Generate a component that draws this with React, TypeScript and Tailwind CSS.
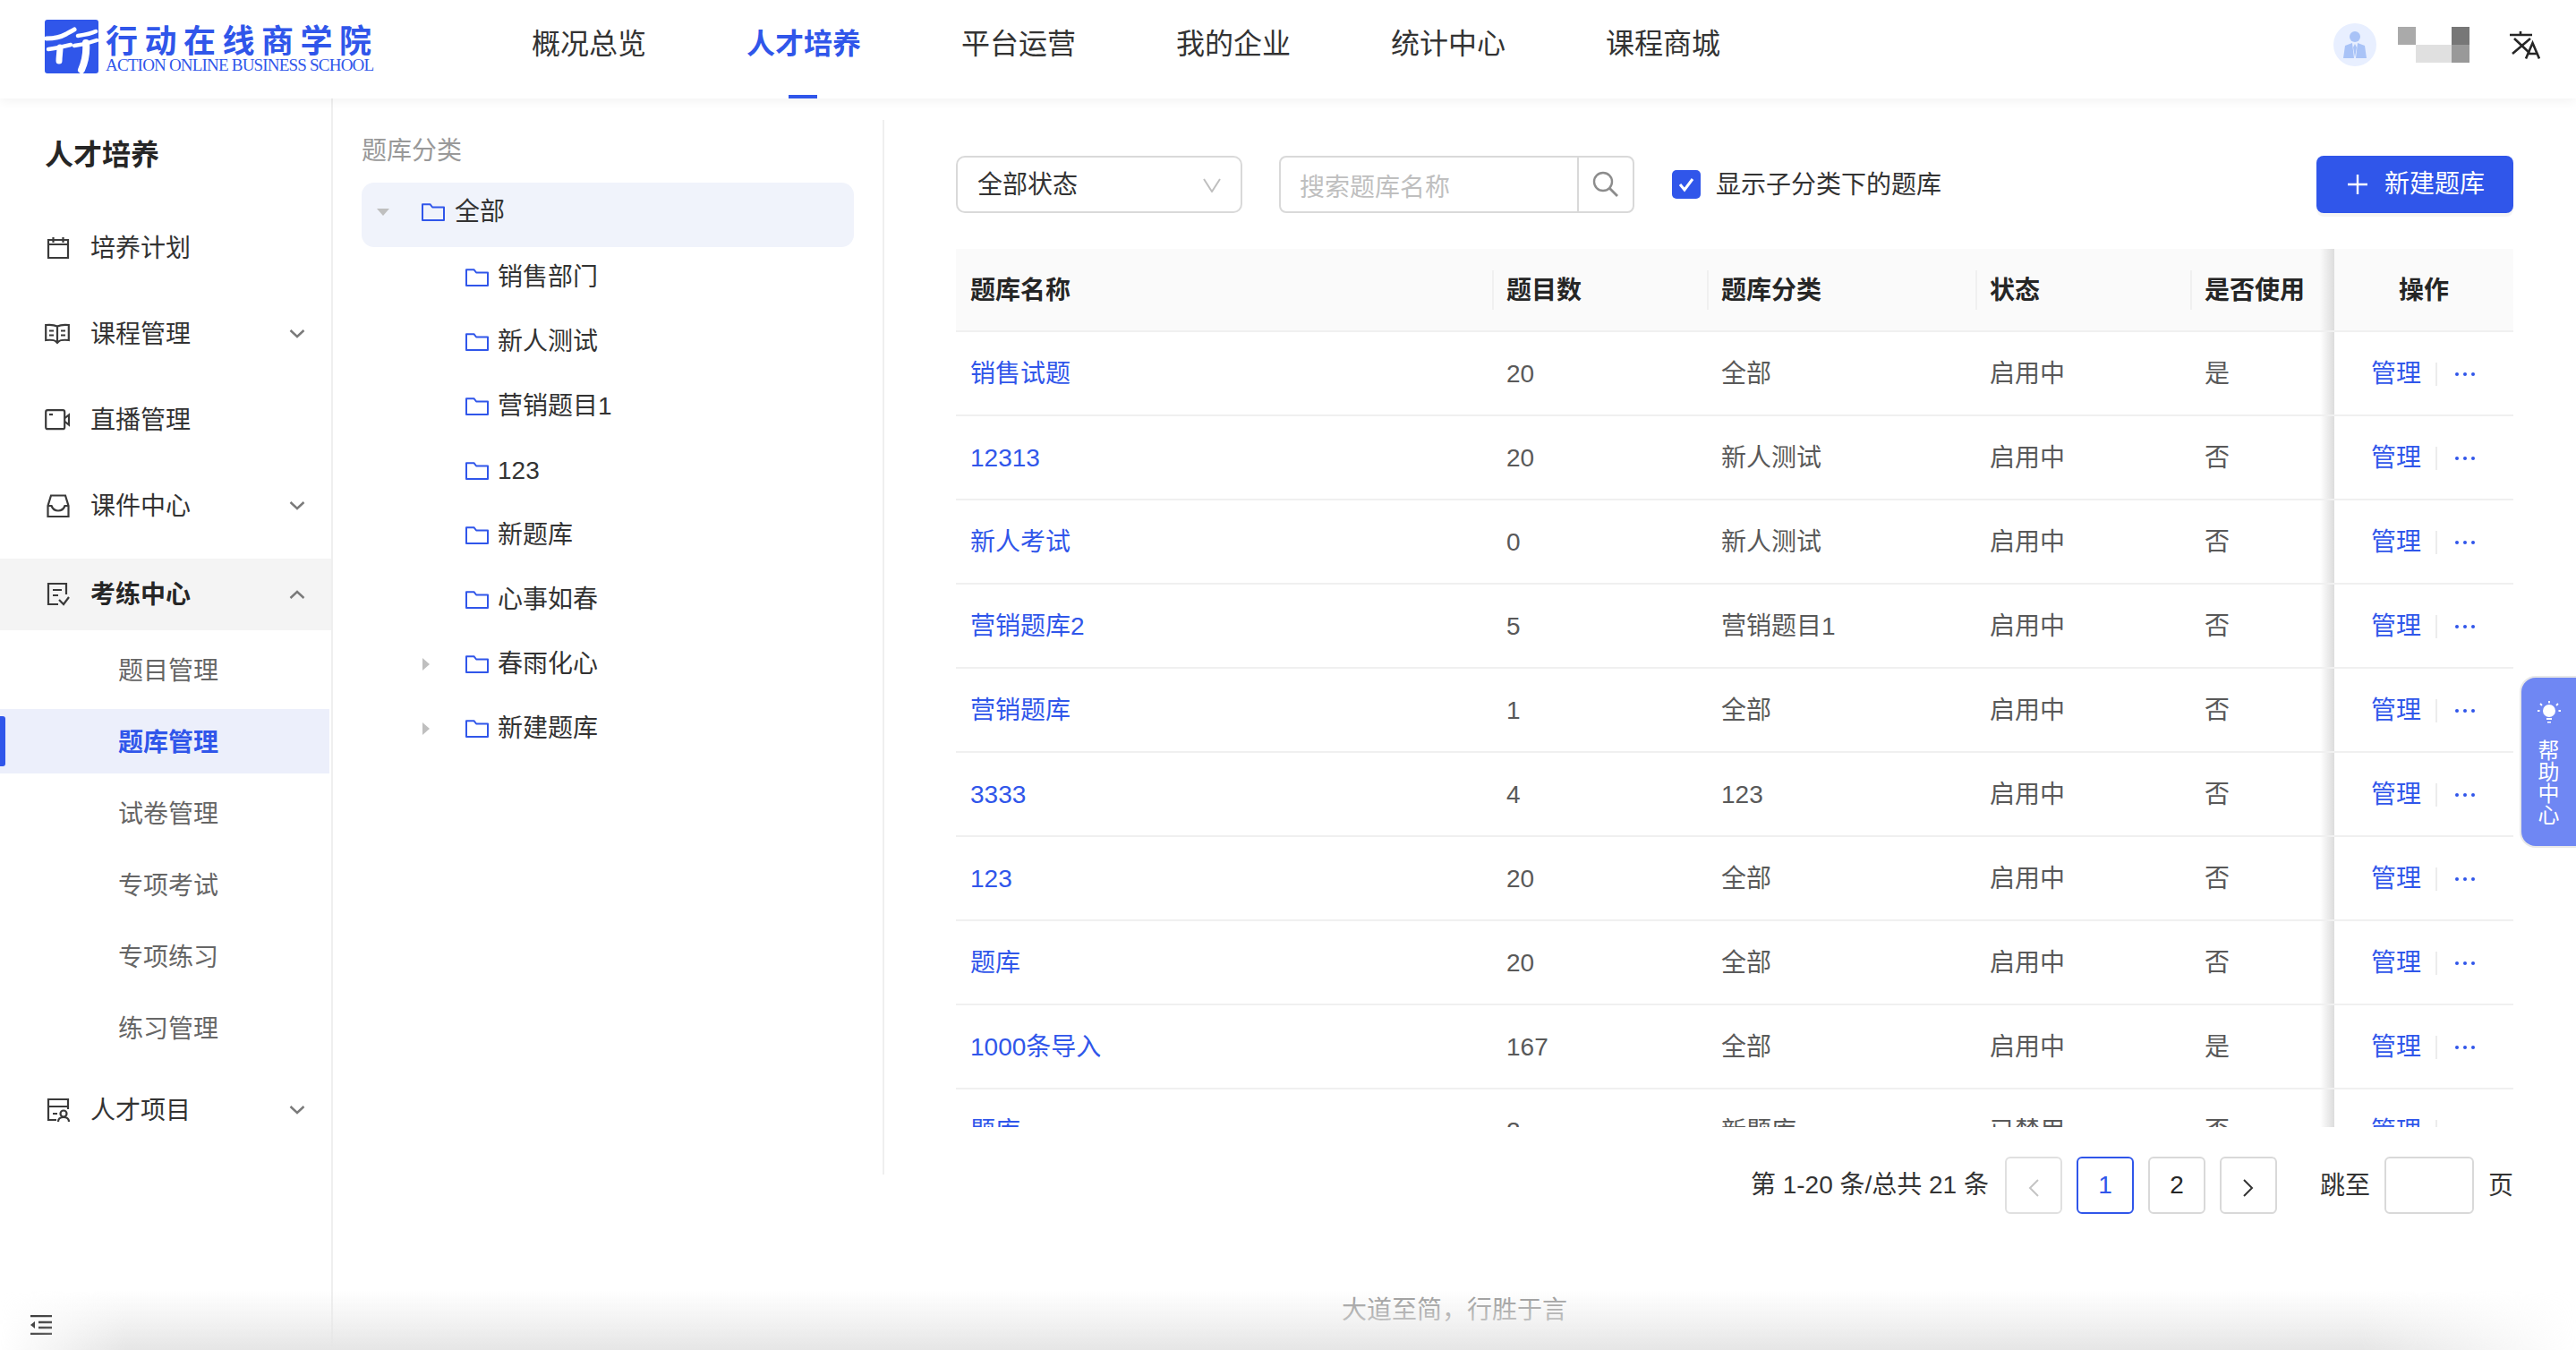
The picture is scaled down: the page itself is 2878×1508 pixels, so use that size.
import React from "react";

function Folder() {
  return (
    <svg width="26" height="20" viewBox="0 0 26 20" fill="none" className="shrink-0">
      <path d="M1 1.2h8.500l2.600 3.300H25V19H1z" stroke="#3056ea" strokeWidth="2" strokeLinejoin="round" />
    </svg>
  );
}

function Chevron({ up }: { up?: boolean }) {
  return (
    <svg width="18" height="10" viewBox="0 0 18 10" fill="none" className="shrink-0">
      <path d={up ? "M1.500 9L9 2l7.500 7" : "M1.500 1L9 8l7.500-7"} stroke="#7a7a7a" strokeWidth="2.400" />
    </svg>
  );
}

function MenuIcon({ name }: { name: string }) {
  const c = { stroke: "#3a3a3a", strokeWidth: 2.2, fill: "none" };
  if (name === "plan")
    return (
      <svg width="26" height="26" viewBox="0 0 26 26">
        <path d="M2 4h22v20H2zM2 9h22M7.500 1v6M18.500 1v6" {...c} />
      </svg>
    );
  if (name === "course")
    return (
      <svg width="28" height="24" viewBox="0 0 28 24" className="-ml-[2px]">
        <path d="M14 3.500C11 2 6 1.500 1.200 2v17c5-.5 9.800 0 11.300 1.500L14 22l1.500-1.500C17 19 21.800 18.500 26.800 19V2C22 1.500 17 2 14 3.500zM14 3.500v17M5 8.500h5M5 13.500h5M18 8.500h5M18 13.500h5" {...c} />
      </svg>
    );
  if (name === "live")
    return (
      <svg width="28" height="24" viewBox="0 0 28 24" className="-ml-[2px]">
        <rect x="1.200" y="1.200" width="21" height="21" rx="2" {...c} />
        <path d="M5 6h4" {...c} />
        <path d="M22.500 10l4.500-3.500v11L22.500 14" {...c} />
      </svg>
    );
  if (name === "ware")
    return (
      <svg width="26" height="27" viewBox="0 0 26 27">
        <path d="M5 1.500h16l3.500 11.500v12h-23V13zM1.500 13h4c1.500 4 4.500 5.500 7.500 5.500s6-1.500 7.500-5.500h4" {...c} />
      </svg>
    );
  if (name === "exam")
    return (
      <svg width="26" height="28" viewBox="0 0 26 28">
        <path d="M13 25H2V2h20v12M7 9h10M7 15h6M14 20l5 5 6-8" {...c} />
      </svg>
    );
  return (
    <svg width="26" height="28" viewBox="0 0 26 28">
      <path d="M11 25H2V2h22v11M2 10h22M7 18h5" {...c} />
      <circle cx="19" cy="18" r="3.500" {...c} />
      <path d="M13 27c0-3 2-5 6-5s6 2 6 5" {...c} />
    </svg>
  );
}

function SideItem({ icon, label, arrow, active }: { icon: string; label: string; arrow?: "up" | "down"; active?: boolean }) {
  return (
    <div className={`flex h-[80px] items-center pr-[29px] ${active ? "bg-[#f4f4f4]" : ""}`}>
      <div className="flex w-[101px] justify-start pl-[52px]">
        <MenuIcon name={icon} />
      </div>
      <span className={`flex-1 pt-[2px] text-[28px] leading-[40px] ${active ? "font-bold text-[#262626]" : "text-[#333333]"}`}>{label}</span>
      {arrow ? <Chevron up={arrow === "up"} /> : null}
    </div>
  );
}

function SubItem({ label, active }: { label: string; active?: boolean }) {
  return (
    <div className={`relative mr-[2px] flex h-[72px] items-center pl-[132px] pt-[4px] text-[28px] leading-[40px] ${active ? "bg-[#eceffb] font-bold text-[#3056ea]" : "text-[#666666]"}`}>
      {active ? <span className="absolute left-0 top-[8px] h-[56px] w-[6px] rounded-r-[3px] bg-[#3056ea]" /> : null}
      {label}
    </div>
  );
}

function Sidebar() {
  return (
    <aside className="flex h-full w-[372px] shrink-0 flex-col border-r-2 border-[#efefef]">
      <div className="pl-[50px] pt-[43px] text-[32px] font-bold leading-[40px] text-[#262626]">人才培养</div>
      <div className="mt-[44px] flex flex-col gap-[16px]">
        <SideItem icon="plan" label="培养计划" />
        <SideItem icon="course" label="课程管理" arrow="down" />
        <SideItem icon="live" label="直播管理" />
        <SideItem icon="ware" label="课件中心" arrow="down" />
        <div className="mt-[3px] flex flex-col">
          <SideItem icon="exam" label="考练中心" arrow="up" active />
          <div className="mt-[8px] flex flex-col gap-[8px]">
            <SubItem label="题目管理" />
            <SubItem label="题库管理" active />
            <SubItem label="试卷管理" />
            <SubItem label="专项考试" />
            <SubItem label="专项练习" />
            <SubItem label="练习管理" />
          </div>
        </div>
        <SideItem icon="proj" label="人才项目" arrow="down" />
      </div>
      <div className="mt-auto pb-[17px] pl-[34px]">
        <svg width="24" height="22" viewBox="0 0 24 22" className="block">
          <path d="M0 1h24M9 8h15M9 14h15M0 21h24" stroke="#2a2a2a" strokeWidth="2.500" fill="none" />
          <path d="M5 7v8l-5-4z" fill="#2a2a2a" />
        </svg>
      </div>
    </aside>
  );
}

function TreeRow({ label, level, arrow, selected }: { label: string; level: number; arrow?: "open" | "closed"; selected?: boolean }) {
  return (
    <div className={`flex h-[72px] items-center text-[28px] leading-[40px] text-[#333333] ${selected ? "rounded-[14px] bg-[#f0f3fb] pb-[7px]" : "pb-[5px]"}`}>
      <div className={`flex shrink-0 items-center ${level === 0 ? "w-[67px]" : "w-[116px]"}`}>
        {arrow === "open" ? <span className="ml-[17px] h-0 w-0 border-x-[7px] border-t-[8px] border-x-transparent border-t-[#bfbfbf]" /> : null}
        {arrow === "closed" ? <span className="ml-[68px] h-0 w-0 border-y-[7px] border-l-[8px] border-y-transparent border-l-[#bfbfbf]" /> : null}
      </div>
      <Folder />
      <span className={level === 0 ? "ml-[11px]" : "ml-[10px]"}>{label}</span>
    </div>
  );
}

function TreePanel() {
  return (
    <div className="mt-[24px] h-[1178px] w-[616px] shrink-0 border-r-2 border-[#efefef] pl-[32px] pr-[32px]">
      <div className="pt-[15px] text-[28px] leading-[40px] text-[#999999]">题库分类</div>
      <div className="mt-[15px] flex flex-col">
        <TreeRow label="全部" level={0} arrow="open" selected />
        <TreeRow label="销售部门" level={1} />
        <TreeRow label="新人测试" level={1} />
        <TreeRow label="营销题目1" level={1} />
        <TreeRow label="123" level={1} />
        <TreeRow label="新题库" level={1} />
        <TreeRow label="心事如春" level={1} />
        <TreeRow label="春雨化心" level={1} arrow="closed" />
        <TreeRow label="新建题库" level={1} arrow="closed" />
      </div>
    </div>
  );
}

const COLS = ["w-[599px]", "w-[240px]", "w-[300px]", "w-[240px]", "w-[161px]"];

const ROWS: [string, string, string, string, string][] = [
  ["销售试题", "20", "全部", "启用中", "是"],
  ["12313", "20", "新人测试", "启用中", "否"],
  ["新人考试", "0", "新人测试", "启用中", "否"],
  ["营销题库2", "5", "营销题目1", "启用中", "否"],
  ["营销题库", "1", "全部", "启用中", "否"],
  ["3333", "4", "123", "启用中", "否"],
  ["123", "20", "全部", "启用中", "否"],
  ["题库", "20", "全部", "启用中", "否"],
  ["1000条导入", "167", "全部", "启用中", "是"],
  ["题库", "2", "新题库", "已禁用", "否"],
];

function HeaderCell({ label, index }: { label: string; index: number }) {
  return (
    <div className={`${COLS[index]} relative flex h-full shrink-0 items-center pl-[16px] pt-[2px] text-[28px] font-bold leading-[40px] text-[#262626]`}>
      {index > 0 ? <span className="absolute left-0 top-[24px] h-[44px] w-[2px] bg-[#f0f0f0]" /> : null}
      {label}
    </div>
  );
}

function FixedShadow() {
  return <span className="absolute bottom-0 left-[-16px] top-0 w-[16px] bg-gradient-to-r from-transparent to-[#dcdcdc]" />;
}

function Table() {
  const heads = ["题库名称", "题目数", "题库分类", "状态", "是否使用"];
  return (
    <div className="mt-[40px] h-[981px] w-[1740px] overflow-hidden">
      <div className="flex h-[93px] border-b-2 border-[#f0f0f0] bg-[#fafafa]">
        {heads.map((h, i) => (
          <HeaderCell key={h} label={h} index={i} />
        ))}
        <div className="relative flex h-full w-[200px] shrink-0 items-center justify-center pt-[2px] text-[28px] font-bold leading-[40px] text-[#262626]">
          <FixedShadow />
          操作
        </div>
      </div>
      {ROWS.map((r, i) => (
        <div key={i} className="flex h-[94px] border-b-2 border-[#f0f0f0] text-[28px] leading-[40px] text-[#595959]">
          <div className={`${COLS[0]} flex shrink-0 items-center pl-[16px] pt-[2px] text-[#3056ea]`}>{r[0]}</div>
          <div className={`${COLS[1]} flex shrink-0 items-center pl-[16px] pt-[2px]`}>{r[1]}</div>
          <div className={`${COLS[2]} flex shrink-0 items-center pl-[16px] pt-[2px]`}>{r[2]}</div>
          <div className={`${COLS[3]} flex shrink-0 items-center pl-[16px] pt-[2px]`}>{r[3]}</div>
          <div className={`${COLS[4]} flex shrink-0 items-center pl-[16px] pt-[2px]`}>{r[4]}</div>
          <div className="relative flex w-[200px] shrink-0 items-center pl-[41px] pt-[2px] text-[#3056ea]">
            <FixedShadow />
            <span>管理</span>
            <span className="ml-[16px] h-[26px] w-[2px] bg-[#ececec]" />
            <svg width="22" height="4" viewBox="0 0 22 4" className="ml-[20px]">
              <circle cx="2" cy="2" r="2" fill="#3056ea" />
              <circle cx="11" cy="2" r="2" fill="#3056ea" />
              <circle cx="20" cy="2" r="2" fill="#3056ea" />
            </svg>
          </div>
        </div>
      ))}
    </div>
  );
}

function Toolbar() {
  return (
    <div className="flex h-[64px] items-center">
      <div className="flex h-[64px] w-[320px] items-center justify-between rounded-[10px] border-2 border-[#d9d9d9] pl-[22px] pr-[22px] pt-[2px] text-[28px] leading-[40px] text-[#333333]">
        全部状态
        <svg width="20" height="16" viewBox="0 0 20 16" fill="none">
          <path d="M1 1l9 14 9-14" stroke="#bfbfbf" strokeWidth="2" />
        </svg>
      </div>
      <div className="ml-[41px] flex h-[64px] w-[397px] items-center rounded-[8px] border-2 border-[#d9d9d9]">
        <span className="flex-1 pl-[21px] pt-[8px] text-[28px] leading-[40px] text-[#bfbfbf]">搜索题库名称</span>
        <div className="flex h-full w-[62px] items-center justify-center border-l-2 border-[#d9d9d9]">
          <svg width="30" height="30" viewBox="0 0 30 30" fill="none">
            <circle cx="12" cy="12" r="10" stroke="#8c8c8c" strokeWidth="2.400" />
            <path d="M19 19l9 9" stroke="#8c8c8c" strokeWidth="2.800" />
          </svg>
        </div>
      </div>
      <div className="ml-[42px] flex h-[32px] w-[32px] items-center justify-center rounded-[5px] bg-[#3056ea]">
        <svg width="20" height="18" viewBox="0 0 20 18" fill="none">
          <path d="M3 9l5 6 9-12" stroke="#ffffff" strokeWidth="3" />
        </svg>
      </div>
      <span className="ml-[17px] pt-[2px] text-[28px] leading-[40px] text-[#333333]">显示子分类下的题库</span>
      <button className="ml-auto flex h-[64px] w-[220px] items-center justify-start gap-[19px] rounded-[8px] bg-[#3056ea] pl-[35px] text-[28px] leading-[40px] text-white shadow-[0_4px_0_rgba(0,0,0,0.04)]">
        <svg width="22" height="22" viewBox="0 0 22 22" fill="none">
          <path d="M11 0v22M0 11h22" stroke="#ffffff" strokeWidth="2.400" />
        </svg>
        新建题库
      </button>
    </div>
  );
}

function PageBtn({ children, active, muted }: { children: React.ReactNode; active?: boolean; muted?: boolean }) {
  return (
    <div className={`flex h-[64px] w-[64px] items-center justify-center rounded-[6px] border-2 text-[28px] leading-[40px] ${active ? "border-[#3056ea] text-[#3056ea]" : muted ? "border-[#e0e0e0]" : "border-[#d9d9d9] text-[#262626]"}`}>
      {children}
    </div>
  );
}

function Pagination() {
  return (
    <div className="mt-[33px] flex items-center justify-end text-[28px] leading-[40px] text-[#333333]">
      <span className="mr-[18px]">第 1-20 条/总共 21 条</span>
      <div className="flex gap-[16px]">
        <PageBtn muted>
          <svg width="14" height="20" viewBox="0 0 14 20" fill="none" className="mt-[6px]">
            <path d="M12 1L3 10l9 9" stroke="#c4c4c4" strokeWidth="2" />
          </svg>
        </PageBtn>
        <PageBtn active>1</PageBtn>
        <PageBtn>2</PageBtn>
        <PageBtn>
          <svg width="14" height="20" viewBox="0 0 14 20" fill="none" className="mt-[6px]">
            <path d="M2 1l9 9-9 9" stroke="#333333" strokeWidth="2" />
          </svg>
        </PageBtn>
      </div>
      <span className="ml-[48px] pt-[2px]">跳至</span>
      <div className="ml-[16px] h-[64px] w-[100px] rounded-[6px] border-2 border-[#d9d9d9]" />
      <span className="ml-[16px] w-[28px] pt-[2px]">页</span>
    </div>
  );
}

function Logo() {
  return (
    <div className="flex items-center">
      <div className="flex h-[60px] w-[60px] shrink-0 items-center justify-center rounded-[3px] bg-[#3056ea]">
        <svg width="60" height="60" viewBox="0 0 60 60" fill="none" stroke="#ffffff" strokeLinecap="round">
          <path d="M2 21c8 0 15-1 22-5 3-2 6-3 9-5" strokeWidth="5" />
          <path d="M4 33c9-1 17-3 25-5" strokeWidth="4.500" />
          <path d="M17 31c0 5-1 10-1 15" strokeWidth="7" />
          <path d="M37 18c7-1 14-2 20-5" strokeWidth="4.500" />
          <path d="M33 29c9-1 17-3 25-6" strokeWidth="4.500" />
          <path d="M46 26c1 11-1 21-5 30" strokeWidth="8" />
        </svg>
      </div>
      <div className="ml-[8px] flex h-[60px] w-[298px] flex-col pt-[3px]">
        <span className="font-['Noto_Sans_CJK_SC',sans-serif] text-[36px] font-bold leading-[36px] tracking-[7.500px] text-[#3056ea] whitespace-nowrap">行动在线商学院</span>
        <span className="mt-[4px] font-['Liberation_Serif',serif] text-[19px] leading-[16px] tracking-[-0.8px] text-[#3056ea] whitespace-nowrap">ACTION ONLINE BUSINESS SCHOOL</span>
      </div>
    </div>
  );
}

function Header() {
  const nav = ["概况总览", "人才培养", "平台运营", "我的企业", "统计中心", "课程商城"];
  return (
    <header className="relative z-10 flex h-[110px] shrink-0 items-center bg-white pl-[50px] shadow-[0_2px_12px_rgba(0,0,0,0.06)]">
      <div className="w-[544px] shrink-0 -mt-[6px]">
        <Logo />
      </div>
      <nav className="flex h-full gap-[112px]">
        {nav.map((n, i) => (
          <div key={n} className={`relative flex h-full items-start pt-[29px] text-[32px] leading-[40px] ${i === 1 ? "font-bold text-[#3056ea]" : "text-[#333333]"}`}>
            {n}
            {i === 1 ? <span className="absolute bottom-0 left-[47px] h-[4px] w-[32px] bg-[#3056ea]" /> : null}
          </div>
        ))}
      </nav>
      <div className="ml-auto flex items-center pr-[40px] -mt-[10px]">
        <div className="flex h-[48px] w-[48px] items-center justify-center rounded-full bg-[#e8efff]">
          <svg width="26" height="30" viewBox="0 0 26 30" fill="#a9c3f7">
            <circle cx="13" cy="6" r="6" />
            <path d="M0 30l2-14 8-3 2 17zM26 30l-2-14-8-3-2 17z" />
            <path d="M13 14l2 4-2 11-2-11z" />
          </svg>
        </div>
        <div className="ml-[24px] grid h-[40px] w-[80px] grid-cols-4 grid-rows-2">
          <span className="bg-[#aaaaaa]" />
          <span />
          <span />
          <span className="bg-[#777777]" />
          <span />
          <span className="col-span-2 bg-[#e0e0e0]" />
          <span className="bg-[#999999]" />
        </div>
        <svg width="34" height="31" viewBox="0 0 34 31" fill="none" className="ml-[45px]" stroke="#262626" strokeWidth="2.600">
          <path d="M0 4h25M12 0v4M5 8l17 16M23 8L3 25" />
          <path d="M18 30.500L25.500 13 33 30.500M21 25h9" />
        </svg>
      </div>
    </header>
  );
}

export default function App() {
  return (
    <div className="relative flex h-[1508px] w-[2878px] flex-col overflow-hidden bg-white font-['Liberation_Sans','Noto_Sans_CJK_SC',sans-serif]">
      <Header />
      <div className="flex min-h-0 flex-1">
        <Sidebar />
        <div className="flex min-w-0 flex-1 flex-col">
          <div className="flex">
            <TreePanel />
            <main className="min-w-0 flex-1 pl-[80px] pr-[70px] pt-[64px]">
              <Toolbar />
              <Table />
              <Pagination />
            </main>
          </div>
          <div className="mt-[88px] text-center text-[28px] leading-[40px] text-[#999999]">大道至简，行胜于言</div>
        </div>
      </div>
      <div className="absolute right-0 top-[757px] flex h-[188px] w-[61px] flex-col items-center rounded-l-[16px] bg-[#6f87f3] pt-[25px] text-[24px] leading-[24px] text-white shadow-[0_0_0_2px_#e8e8e8]">
        <svg width="26" height="28" viewBox="0 0 26 28" fill="none">
          <circle cx="13" cy="12" r="7" fill="#ffffff" />
          <path d="M10 20h6v2h-6zM11 24h4v1.500h-4z" fill="#ffffff" />
          <path d="M13 1v2.500M3 4l2 2M23 4l-2 2M0 12h2.500M23.500 12H26" stroke="#ffffff" strokeWidth="1.800" />
        </svg>
        <div className="mt-[17px] flex flex-col items-center">
          <span>帮</span>
          <span>助</span>
          <span>中</span>
          <span>心</span>
        </div>
      </div>
      <div className="pointer-events-none absolute bottom-0 left-0 right-0 h-[66px] bg-gradient-to-b from-transparent to-[#e6e6e6] [mask-image:linear-gradient(90deg,transparent,black_140px,black_calc(100%-240px),transparent)]" />
    </div>
  );
}
